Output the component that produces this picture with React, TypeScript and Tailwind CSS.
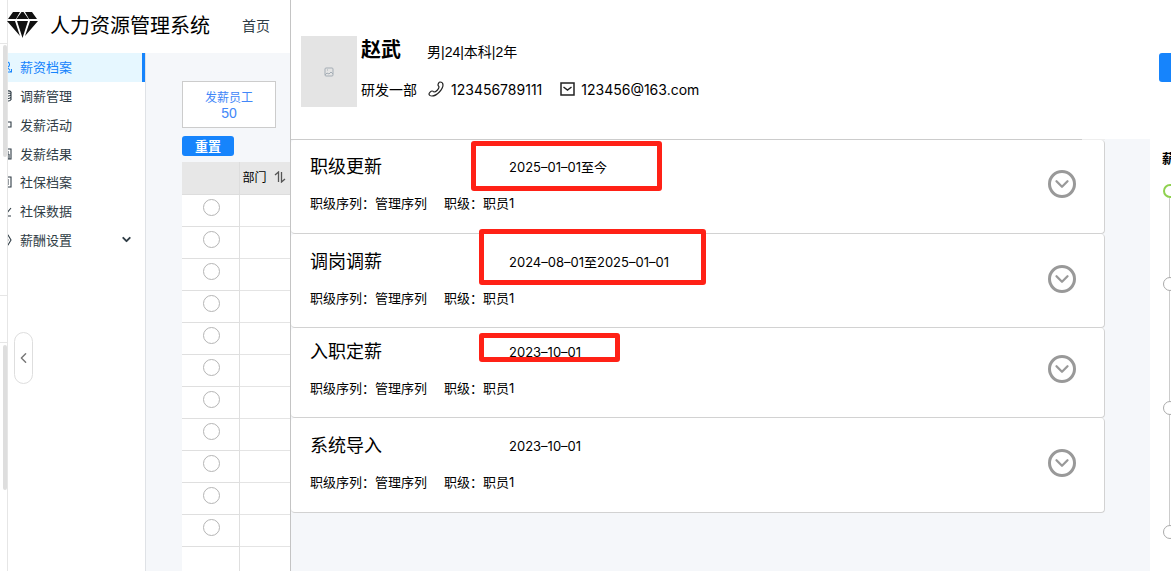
import { useState } from 'react';
import { ChevronDown, ChevronLeft } from 'lucide-react';

const MENU = [
  { label: '薪资档案', icon: 'user' },
  { label: '调薪管理', icon: 'coins' },
  { label: '发薪活动', icon: 'flag' },
  { label: '发薪结果', icon: 'calc' },
  { label: '社保档案', icon: 'doc' },
  { label: '社保数据', icon: 'chart' },
  { label: '薪酬设置', icon: 'gear', expandable: true },
];

const RECORDS = [
  { title: '职级更新', period: '2025–01–01至今', card: 'h-[94px] pt-[15px]', mark: '-left-[38px] -top-[14px] h-[50px] w-[191px]' },
  { title: '调岗调薪', period: '2024–08–01至2025–01–01', card: 'h-[94px] pt-4', mark: '-left-[30px] -top-[21px] h-[56px] w-[227px]' },
  { title: '入职定薪', period: '2023–10–01', card: 'h-[90px] pt-3', mark: '-left-[30px] -top-[7px] h-[29px] w-[141px]' },
  { title: '系统导入', period: '2023–10–01', card: 'h-[95px] pt-4', mark: '' },
];

const ROWS = Array.from({ length: 11 }, (_, i) => i);

function Diamond() {
  return (
    <svg viewBox="0 0 31 26" className="-ml-px h-[26px] w-[31px] shrink-0" fill="#111">
      <path d="M6 0h7L9 7H1zM14.500 0h2l5 7h-12zM18 0h7l5 7h-8zM0 9h8l5 15zM10 9h11l-5.500 17zM23 9h8L18 24z" />
    </svg>
  );
}

function MenuIcon({ name }: { name: string }) {
  return (
    <svg
      viewBox="0 0 12 12"
      className="-ml-2 h-3 w-3 shrink-0"
      fill="none"
      stroke="currentColor"
      strokeWidth="1.1"
    >
      {name === 'user' && <path d="M7 1a2.500 2.500 0 1 1 0 5a2.500 2.500 0 1 1 0-5M2 11c0-3 2-5 5-5M8 7l3 3.500M11.500 8v3H7" />}
      {name === 'coins' && <path d="M5 2c2-1.500 5-1.500 6 0s-4 2-6 0M5 4.500c2 2 5 2 6 0M5 7c2 2 5 2 6 0M5 9.500c2 2 5 2 6 0M11 2v8" />}
      {name === 'flag' && <path d="M2 11V3h9v5H4" />}
      {name === 'calc' && <path d="M1 1h10v10H1zM7 4h2M7 6h2M9 6v5M5 4v7" />}
      {name === 'doc' && <path d="M1 1h10v10H1zM6 4h3M6 6h3M6 8h3" />}
      {name === 'chart' && <path d="M1 1v10h10M6 9l5-6" />}
      {name === 'gear' && <path d="M4 1h4l3 5l-3 5H4L1 6zM6 4l2 2l-2 2" />}
    </svg>
  );
}

function SortIcon() {
  return (
    <svg viewBox="0 0 12 12" className="h-3 w-3" fill="none" stroke="#555" strokeWidth="1.3">
      <path d="M1 4l3.500-3v10M7.500 1v10L11 8" />
    </svg>
  );
}

function Sidebar() {
  const [active, setActive] = useState(0);

  return (
    <aside className="relative w-[138px] shrink-0 border-r border-[#dfe2e6] bg-white">
      <nav className="flex h-[201px] flex-col">
        {MENU.map((item, i) => (
          <button
            key={item.label}
            onClick={() => setActive(i)}
            className={`flex w-full flex-1 items-center gap-2 overflow-hidden text-[13px] leading-6 ${
              active === i
                ? 'border-r-[3px] border-[#1684fc] bg-[#e6f7ff] text-[#1684fc]'
                : 'text-[#303d46]'
            }`}
          >
            <MenuIcon name={item.icon} />
            <span>{item.label}</span>
            {item.expandable && (
              <ChevronDown size={13} strokeWidth={3.5} className="mr-3 ml-auto" />
            )}
          </button>
        ))}
      </nav>
      <button
        aria-label="收起"
        className="absolute top-[279px] left-[6px] flex h-[52px] w-[19px] items-center justify-center rounded-full border border-[#dedede] bg-white text-[#777]"
      >
        <ChevronLeft size={18} strokeWidth={2} />
      </button>
    </aside>
  );
}

function EmployeeTable() {
  return (
    <main className="min-w-0 flex-1 overflow-hidden bg-[#f5f7fa] pt-7 pl-9">
      <div className="flex h-[47px] w-[94px] flex-col items-center justify-center border border-[#ccc] bg-white text-[#4287f8]">
        <span className="text-[12px] leading-[17px]">发薪员工</span>
        <span className="text-[14px] leading-[17px] font-['Liberation_Sans']">50</span>
      </div>
      <button className="mt-2 flex h-5 w-[52px] items-center justify-center rounded-[3px] bg-[#1684fc] text-[13px] font-bold text-white">
        重置
      </button>
      <table className="mt-[6px] w-full table-fixed border-collapse bg-white">
        <thead>
          <tr className="h-[32px] bg-[#e7e7e7] text-[12px] text-black">
            <th className="w-[57px] border-r border-b border-[#ddd]" />
            <th className="border-b border-[#ddd] p-0 pb-[2px] pl-[3px] font-normal">
              <span className="flex items-center gap-[7px]">
                部门
                <SortIcon />
              </span>
            </th>
          </tr>
        </thead>
        <tbody>
          {ROWS.map((row) => (
            <tr key={row} className="h-8">
              <td className="border-r border-b border-[#dfdfdf] p-0 pb-[5px] pl-[3px]">
                <input
                  type="radio"
                  name="employee"
                  aria-label={`员工 ${row + 1}`}
                  className="mx-auto block h-[17px] w-[17px] appearance-none rounded-full border border-[#b5b5b5] checked:border-[5px] checked:border-[#1684fc]"
                />
              </td>
              <td className="border-b border-[#e4e4e4]" />
            </tr>
          ))}
          <tr className="h-8">
            <td className="border-r border-[#dfdfdf]" />
            <td />
          </tr>
        </tbody>
      </table>
    </main>
  );
}

function ProfileHeader() {
  return (
    <header className="flex h-[139px] shrink-0 items-start bg-white pt-9 pl-[10px]">
      <div className="flex h-[71px] w-14 items-center justify-center bg-[#e4e4e4]">
        <svg viewBox="0 0 10 10" className="h-[10px] w-[10px]" fill="none" stroke="#a4adb5">
          <rect x="1" y="1" width="8" height="8" rx="1" />
          <path d="M1 8l2-2l2 1l2-2l2 2M3 3h1" />
        </svg>
      </div>
      <div className="ml-1 flex-1 text-black">
        <div className="flex h-7 items-center">
          <h1 className="w-[66px] text-[20px] leading-7 font-bold">赵武</h1>
          <span className="pt-1 text-[14px] leading-6 font-['Liberation_Sans','Noto_Sans_CJK_SC',sans-serif]">
            男|24|本科|2年
          </span>
        </div>
        <div className="mt-[13px] flex h-6 items-center text-[14px]">
          <span>研发一部</span>
          <svg viewBox="0 0 16 16" className="ml-[11px] h-4 w-4" fill="none" stroke="#222" strokeWidth="1.2">
            <path d="M1 13c0-1 2-3 3-3c2 0 1 1 2 1c2 0 5-3 5-5c0-1-1-1-1-2c0-1 1-3 2-3c2 0 3 1 3 3c0 4-6 11-11 11c-2 0-3-1-3-2z" />
          </svg>
          <span className="ml-[7px]">123456789111</span>
          <svg viewBox="0 0 15 14" className="ml-[18px] h-[14px] w-[15px]" fill="none" stroke="#222" strokeWidth="1.5">
            <path d="M1 1h13v12H1zM3.500 5l4 3l4-3" />
          </svg>
          <span className="ml-[6px]">123456@163.com</span>
        </div>
      </div>
      <button aria-label="操作" className="mt-[17px] h-[29px] w-3 rounded-l-[3px] bg-[#1684fc]" />
    </header>
  );
}

function RecordCard({ record }: { record: (typeof RECORDS)[number] }) {
  return (
    <article
      className={`flex items-start justify-between rounded border-r border-b border-[#d2d2d2] bg-white pr-7 pl-[19px] text-black ${record.card}`}
    >
      <div>
        <div className="flex h-6 items-center">
          <h2 className="w-[199px] text-[18px] leading-6">{record.title}</h2>
          <span className="relative text-[13px] leading-6">
            {record.period}
            {record.mark && (
              <span className={`absolute rounded-[3px] border-[5px] border-[#ff2116] ${record.mark}`} />
            )}
          </span>
        </div>
        <p className="mt-3 flex gap-[17px] text-[13px] leading-6">
          <span>职级序列：管理序列</span>
          <span>职级：职员1</span>
        </p>
      </div>
      <button
        aria-label="展开"
        className="mt-[15px] flex h-7 w-7 items-center justify-center rounded-full border-[3px] border-[#999] text-[#999]"
      >
        <ChevronDown size={22} strokeWidth={2.5} className="shrink-0" />
      </button>
    </article>
  );
}

function Timeline() {
  return (
    <aside className="flex w-[21px] shrink-0 flex-col overflow-hidden bg-white pt-[7px] pl-3">
      <h3 className="text-[13px] leading-6 font-bold whitespace-nowrap text-black">薪</h3>
      <div className="mt-[14px] ml-px h-[14px] w-[14px] shrink-0 rounded-full border-[2px] border-[#8fd14f]" />
      <div className="ml-[7px] h-[79px] w-px shrink-0 bg-[#ccc]" />
      <div className="ml-px h-[14px] w-[14px] shrink-0 rounded-full border border-[#aaa]" />
      <div className="ml-[7px] h-[110px] w-px shrink-0 bg-[#ccc]" />
      <div className="ml-px h-[14px] w-[14px] shrink-0 rounded-full border border-[#aaa]" />
      <div className="ml-[7px] h-[110px] w-px shrink-0 bg-[#ccc]" />
      <div className="ml-px h-[14px] w-[14px] shrink-0 rounded-full border border-[#aaa]" />
    </aside>
  );
}

export default function App() {
  return (
    <div className="flex h-screen overflow-hidden bg-white font-['Noto_Sans_CJK_SC',sans-serif]">
      <div className="flex w-2 shrink-0 flex-col items-end border-r border-[#e6e6e6]">
        <div className="h-11 w-full border-b border-[#e6e6e6]" />
        <div className="mt-px h-28 w-1 rounded-full bg-[#dedede]" />
        <div className="mt-[138px] h-12 w-full border-y border-[#e6e6e6]" />
        <div className="mt-[2px] h-[145px] w-1 rounded-full bg-[#dedede]" />
      </div>

      <section className="flex w-[282px] shrink-0 flex-col">
        <header className="flex h-[53px] shrink-0 items-center pb-[3px]">
          <Diamond />
          <span className="ml-3 text-[20px] whitespace-nowrap text-black">人力资源管理系统</span>
          <a href="#" className="ml-8 text-[14px] whitespace-nowrap text-[#303d46]">
            首页
          </a>
        </header>
        <div className="flex min-h-0 flex-1">
          <Sidebar />
          <EmployeeTable />
        </div>
      </section>

      <section className="flex min-w-0 flex-1 flex-col border-l border-[#c4c4c4] font-[Inter,'Noto_Sans_CJK_SC',sans-serif]">
        <ProfileHeader />
        <div className="flex min-h-0 flex-1 bg-[#f5f7fa]">
          <div className="mr-[45px] flex-1">
            <div className="flex h-px bg-[#eee]">
              <div className="mr-[23px] flex-1 bg-[#ccc]" />
            </div>
            {RECORDS.map((record) => (
              <RecordCard key={record.title} record={record} />
            ))}
          </div>
          <Timeline />
        </div>
      </section>
    </div>
  );
}
